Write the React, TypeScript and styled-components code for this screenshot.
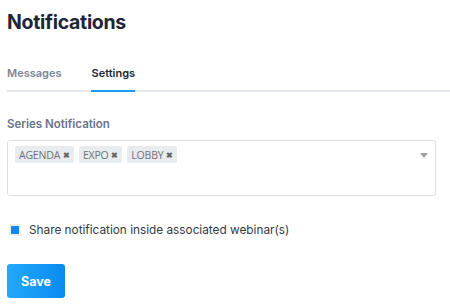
import styled, { createGlobalStyle } from "styled-components";

const GlobalStyle = createGlobalStyle`
  body {
    margin: 0;
    background: #fff;
    font-family: Inter, "Noto Sans", sans-serif;
  }
`;

const Page = styled.div`
  padding: 8px 14px 10px 7px;
  display: flex;
  flex-direction: column;
`;

const Title = styled.h1`
  margin: 0;
  font-size: 19.5px;
  font-weight: 700;
  color: #1d2636;
  letter-spacing: -0.3px;
  line-height: 28px;
`;

const TabBar = styled.div`
  display: flex;
  gap: 30px;
  margin-top: 26px;
  border-bottom: 2px solid #e4e8ef;
  margin-right: -14px;
`;

const Tab = styled.div<{ $active?: boolean }>`
  font-size: 11px;
  font-weight: 600;
  color: ${(p) => (p.$active ? "#1d2636" : "#7d8696")};
  padding: 4px 0 10px;
  margin-bottom: -2px;
  border-bottom: 2px solid ${(p) => (p.$active ? "#1a9cf2" : "transparent")};
`;

const Label = styled.div`
  margin-top: 25px;
  font-size: 11.5px;
  font-weight: 600;
  color: #6b7587;
`;

const SelectBox = styled.div`
  margin-top: 9px;
  height: 56px;
  box-sizing: border-box;
  border: 1px solid #dedede;
  border-radius: 3px;
  padding: 5px 7px;
  display: flex;
  align-items: flex-start;
  gap: 5px;
  position: relative;
`;

const Tag = styled.span`
  display: inline-flex;
  align-items: center;
  gap: 3px;
  background: #e9ecef;
  color: #6d7278;
  font-family: "Open Sans", Lato, sans-serif;
  font-size: 10.5px;
  letter-spacing: -0.2px;
  height: 17px;
  padding: 0 4px;
  border-radius: 2px;
`;

const Remove = styled.span`
  font-size: 8px;
  font-weight: 700;
  color: #666;
  line-height: 1;
`;

const Caret = styled.span`
  position: absolute;
  right: 7px;
  top: 12px;
  width: 0;
  height: 0;
  border-left: 4px solid transparent;
  border-right: 4px solid transparent;
  border-top: 5px solid #a0a0a0;
`;

const CheckRow = styled.label`
  margin-top: 27px;
  display: flex;
  align-items: center;
  gap: 8px;
  font-size: 11.8px;
  color: #333a45;
  padding-left: 2px;
`;

const CheckBox = styled.span`
  width: 12px;
  height: 12px;
  box-sizing: border-box;
  border: 2px solid #eef0f3;
  background: #1687ef;
`;

const SaveButton = styled.button`
  margin-top: 27px;
  width: 58px;
  height: 34px;
  border: none;
  border-radius: 3px;
  background: linear-gradient(90deg, #22a9fb, #0a8bf0);
  color: #fff;
  font-family: Inter, sans-serif;
  font-size: 12.5px;
  font-weight: 700;
  padding: 0;
`;

export default function App() {
  const tags = ["AGENDA", "EXPO", "LOBBY"];
  return (
    <>
      <GlobalStyle />
      <Page>
        <Title>Notifications</Title>
        <TabBar>
          <Tab>Messages</Tab>
          <Tab $active>Settings</Tab>
        </TabBar>
        <Label>Series Notification</Label>
        <SelectBox>
          {tags.map((t) => (
            <Tag key={t}>
              {t} <Remove>✖</Remove>
            </Tag>
          ))}
          <Caret />
        </SelectBox>
        <CheckRow>
          <CheckBox />
          Share notification inside associated webinar(s)
        </CheckRow>
        <div>
          <SaveButton>Save</SaveButton>
        </div>
      </Page>
    </>
  );
}
